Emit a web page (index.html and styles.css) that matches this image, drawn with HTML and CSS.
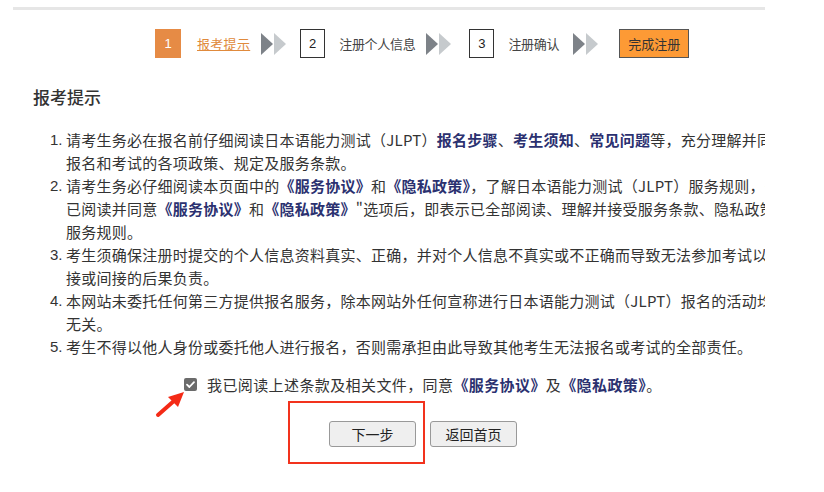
FILE: index.html
```html
<!DOCTYPE html>
<html lang="zh-CN">
<head>
<meta charset="utf-8">
<title>报考提示</title>
<link rel="stylesheet" href="styles.css">
</head>
<body>
<div class="page">
  <div class="topline"></div>

  <div class="steps">
    <span class="stepnum current">1</span>
    <a class="steplabel current" href="#">报考提示</a>
    <svg class="arrows" width="28" height="22" viewBox="0 0 28 22"><polygon points="0,0 12,11 0,22" fill="#7d8288"/><polygon points="13,0 25,11 13,22" fill="#c6cacd"/></svg>
    <span class="stepnum">2</span>
    <span class="steplabel">注册个人信息</span>
    <svg class="arrows" width="28" height="22" viewBox="0 0 28 22"><polygon points="0,0 12,11 0,22" fill="#7d8288"/><polygon points="13,0 25,11 13,22" fill="#c6cacd"/></svg>
    <span class="stepnum n3">3</span>
    <span class="steplabel">注册确认</span>
    <svg class="arrows last" width="28" height="22" viewBox="0 0 28 22"><polygon points="0,0 12,11 0,22" fill="#7d8288"/><polygon points="13,0 25,11 13,22" fill="#c6cacd"/></svg>
    <span class="stepdone">完成注册</span>
  </div>

  <h2 class="title">报考提示</h2>

  <ol class="rules">
    <li><span class="num">1.</span><span class="txt">请考生务必在报名前仔细阅读日本语能力测试（JLPT）<b class="lk">报名步骤</b>、<b class="lk">考生须知</b>、<b class="lk">常见问题</b>等，充分理解并同意<br>报名和考试的各项政策、规定及服务条款。</span></li>
    <li><span class="num">2.</span><span class="txt">请考生务必仔细阅读本页面中的<b class="lk">《服务协议》</b>和<b class="lk">《隐私政策》</b>，了解日本语能力测试（JLPT）服务规则，勾选“本人<br>已阅读并同意<b class="lk">《服务协议》</b>和<b class="lk">《隐私政策》</b>"选项后，即表示已全部阅读、理解并接受服务条款、隐私政策和<br>服务规则。</span></li>
    <li><span class="num">3.</span><span class="txt">考生须确保注册时提交的个人信息资料真实、正确，并对个人信息不真实或不正确而导致无法参加考试以及由此产生的直<br>接或间接的后果负责。</span></li>
    <li><span class="num">4.</span><span class="txt">本网站未委托任何第三方提供报名服务，除本网站外任何宣称进行日本语能力测试（JLPT）报名的活动均与本网站<br>无关。</span></li>
    <li><span class="num">5.</span><span class="txt">考生不得以他人身份或委托他人进行报名，否则需承担由此导致其他考生无法报名或考试的全部责任。</span></li>
  </ol>

  <div class="agree">
    <span class="check"><svg width="13" height="13" viewBox="0 0 13 13"><path d="M3 6.6 L5.4 9 L10 4.2" fill="none" stroke="#fff" stroke-width="1.8" stroke-linecap="round" stroke-linejoin="round"/></svg></span>
    <span class="agreetext">我已阅读上述条款及相关文件，同意<b class="lk">《服务协议》</b>及<b class="lk">《隐私政策》</b>。</span>
    <svg class="pointer" width="34" height="30" viewBox="0 0 34 30"><path d="M3 27 L20 12" stroke="#f42a16" stroke-width="4" stroke-linecap="round"/><polygon points="29,4 13,9 23,19" fill="#f42a16"/></svg>
  </div>

  <div class="buttons">
    <button class="btn next" type="button">下一步</button>
    <button class="btn" type="button">返回首页</button>
    <span class="highlight"></span>
  </div>
</div>
</body>
</html>
```

FILE: styles.css
```css
* { box-sizing: border-box; }

body {
  margin: 0;
  background: #fff;
  font-family: "Noto Sans CJK SC", "Liberation Sans", sans-serif;
  color: #333;
}

.page {
  margin-left: 13px;
  width: 752px;
  overflow: hidden;
  padding-top: 7px;
  padding-bottom: 40px;
}

.topline {
  height: 3px;
  background: #e6e6e6;
}

.steps {
  display: flex;
  align-items: center;
  height: 29px;
  margin-top: 19px;
  padding-left: 142px;
  font-size: 13px;
}

.stepnum {
  width: 25px;
  height: 29px;
  border: 1px solid #333;
  display: flex;
  align-items: center;
  justify-content: center;
  font-family: "Liberation Sans", sans-serif;
  font-size: 13px;
  color: #222;
  margin-left: 11px;
}

.stepnum.current {
  width: 26px;
  margin-left: 0;
  border: none;
  background: #e68b45;
  color: #fff;
}

.stepnum.n3 { margin-left: 15px; }

.steplabel {
  margin-left: 14px;
  color: #444;
  letter-spacing: -0.3px;
}

.steplabel.current {
  margin-left: 16px;
  color: #e08a3c;
  text-decoration: underline;
  letter-spacing: 0.3px;
}

.arrows {
  margin-left: 11px;
  flex: none;
}

.arrows.last { margin-left: 14px; }

.stepdone {
  margin-left: 18px;
  width: 70px;
  height: 29px;
  background: #fd9a35;
  border: 1px solid #555;
  display: flex;
  align-items: center;
  justify-content: center;
  color: #333;
}

.title {
  margin: 29px 0 0 20px;
  font-size: 17px;
  line-height: 20px;
  font-weight: 500;
  color: #333;
}

.rules {
  list-style: none;
  margin: 21px 0 0;
  padding: 0 0 0 37px;
  font-size: 15px;
  line-height: 23px;
  color: #333;
}

.rules li {
  display: flex;
  white-space: nowrap;
}

.num {
  width: 16px;
  flex: none;
  font-family: "Liberation Sans", sans-serif;
  font-size: 15px;
}

.txt { letter-spacing: 0.25px; }

.lk {
  color: #2b3170;
  font-weight: bold;
}

.agree {
  position: relative;
  display: flex;
  align-items: center;
  height: 23px;
  margin-top: 15px;
  padding-left: 171px;
  font-size: 15px;
  white-space: nowrap;
}

.check {
  width: 13px;
  height: 13px;
  background: #6b6b6b;
  border-radius: 2px;
  display: flex;
  flex: none;
}

.agreetext {
  margin-left: 10px;
  letter-spacing: 0.4px;
  color: #333;
}

.pointer {
  position: absolute;
  left: 142px;
  top: 15px;
}

.buttons {
  position: relative;
  display: flex;
  gap: 14px;
  margin-top: 25px;
  padding-left: 316px;
}

.btn {
  width: 87px;
  height: 26px;
  background: #efefef;
  border: 1px solid #999;
  border-radius: 3px;
  font-family: "Noto Sans CJK SC", sans-serif;
  font-size: 14px;
  color: #222;
  padding: 0;
}

.highlight {
  position: absolute;
  left: 275px;
  top: -20px;
  width: 137px;
  height: 63px;
  border: 2px solid #f2321d;
}
```
